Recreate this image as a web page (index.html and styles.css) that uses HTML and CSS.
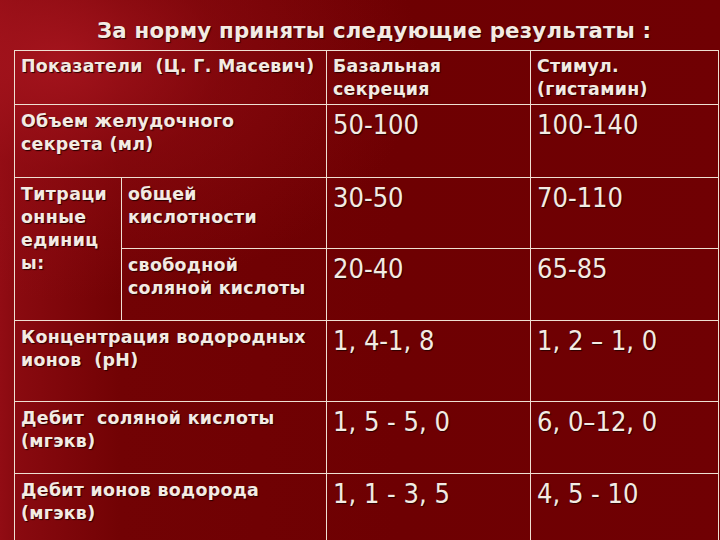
FILE: index.html
```html
<!DOCTYPE html>
<html lang="ru">
<head>
<meta charset="utf-8">
<title>Нормы</title>
<link rel="stylesheet" href="styles.css">
</head>
<body>
<div class="slide">
  <h1 class="title">За норму приняты следующие результаты :</h1>
  <table class="grid">
    <colgroup>
      <col class="c1"><col class="c2"><col class="c3"><col class="c4">
    </colgroup>
    <tr class="r-head">
      <td colspan="2" class="lbl">Показатели&nbsp; (Ц. Г. Масевич)</td>
      <td class="lbl">Базальная<br>секреция</td>
      <td class="lbl">Стимул.<br>(гистамин)</td>
    </tr>
    <tr class="r-1">
      <td colspan="2" class="lbl">Объем желудочного<br>секрета (мл)</td>
      <td class="val">50-100</td>
      <td class="val">100-140</td>
    </tr>
    <tr class="r-2">
      <td rowspan="2" class="lbl spaced">Титраци<br>онные<br>единиц<br>ы:</td>
      <td class="lbl">общей<br>кислотности</td>
      <td class="val">30-50</td>
      <td class="val">70-110</td>
    </tr>
    <tr class="r-3">
      <td class="lbl">свободной<br>соляной кислоты</td>
      <td class="val">20-40</td>
      <td class="val">65-85</td>
    </tr>
    <tr class="r-4">
      <td colspan="2" class="lbl">Концентрация водородных<br>ионов&nbsp; (pH)</td>
      <td class="val">1, 4-1, 8</td>
      <td class="val">1, 2 – 1, 0</td>
    </tr>
    <tr class="r-5">
      <td colspan="2" class="lbl">Дебит&nbsp; соляной кислоты<br>(мгэкв)</td>
      <td class="val">1, 5 - 5, 0</td>
      <td class="val">6, 0–12, 0</td>
    </tr>
    <tr class="r-6">
      <td colspan="2" class="lbl">Дебит ионов водорода<br>(мгэкв)</td>
      <td class="val">1, 1 - 3, 5</td>
      <td class="val">4, 5 - 10</td>
    </tr>
  </table>
</div>
</body>
</html>
```
FILE: styles.css
```css
html, body {
  margin: 0;
  padding: 0;
}
body {
  width: 720px;
  height: 540px;
  overflow: hidden;
  background: #700003;
}
.slide {
  width: 720px;
  height: 540px;
  overflow: hidden;
  background:
    radial-gradient(ellipse 360px 240px at 60px 60px, rgba(170, 22, 32, 0.85) 0%, rgba(150, 14, 22, 0.45) 45%, rgba(120, 0, 6, 0) 100%),
    linear-gradient(90deg, #920c14 0px, #8a0a10 14px, #720204 120px, #6e0002 400px, #700003 720px);
  color: #f3ebe3;
  font-family: "DejaVu Sans", Verdana, sans-serif;
  display: flex;
  flex-direction: column;
}
.title {
  flex: none;
  margin: 0;
  height: 50px;
  box-sizing: border-box;
  padding: 18px 0 0 97px;
  font-size: 21.3px;
  font-weight: bold;
  line-height: 25px;
  letter-spacing: 0.2px;
  white-space: nowrap;
  text-shadow: 1px 1px 1px #2a0000;
}
.grid {
  flex: none;
  margin-left: 14px;
  width: 704px;
  border-collapse: collapse;
  table-layout: fixed;
}
.c1 { width: 107px; }
.c2 { width: 205px; }
.c3 { width: 204px; }
.c4 { width: 188px; }
.grid td {
  border: 1px solid #efdfd2;
  vertical-align: top;
  padding: 5px 4px 0 6px;
  text-shadow: 1px 1px 1px #2a0000;
  white-space: nowrap;
  overflow: hidden;
}
.lbl {
  font-family: "DejaVu Sans", Verdana, sans-serif;
  font-weight: bold;
  font-size: 17.4px;
  line-height: 23px;
  letter-spacing: 0.3px;
}
.spaced {
  letter-spacing: 0.4px;
}
.val {
  font-family: "DejaVu Sans Condensed", "DejaVu Sans", sans-serif;
  font-size: 27px;
  line-height: 30px;
  padding-top: 12px;
}
.r-head { height: 54px; }
.r-head td { padding-top: 4px; }
.r-1 { height: 73px; }
.r-2 { height: 71px; }
.r-3 { height: 72px; }
.r-4 { height: 81px; }
.r-5 { height: 72px; }
.r-6 { height: 80px; }
```
